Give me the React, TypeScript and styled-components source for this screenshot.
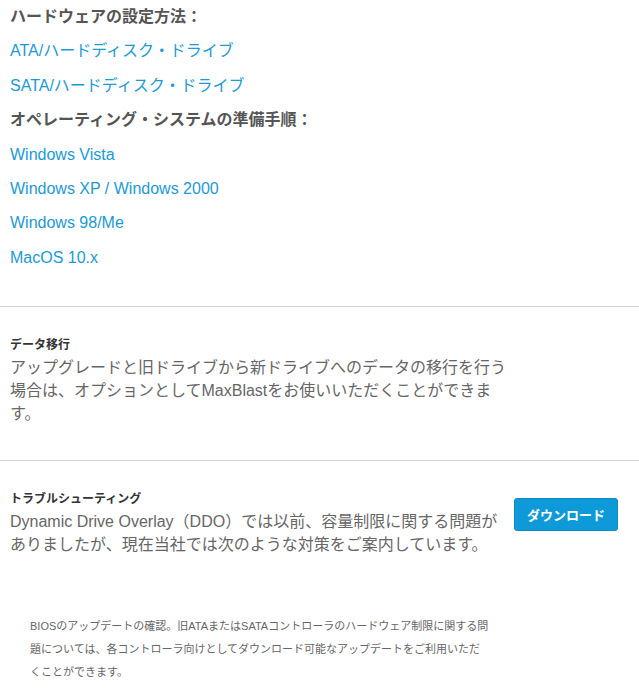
import React from "react";
import styled, { createGlobalStyle } from "styled-components";

const GlobalStyle = createGlobalStyle`
  body {
    margin: 0;
    background: #ffffff;
    font-family: "Liberation Sans", "Noto Sans CJK JP", sans-serif;
  }
`;

const Page = styled.div`
  width: 639px;
  color: #666666;
`;

const GuideList = styled.div`
  padding: 0 0 31px 10px;
`;

const GuideHeading = styled.div`
  font-size: 16px;
  font-weight: bold;
  line-height: 34.4px;
  color: #555555;
`;

const GuideLink = styled.a`
  display: block;
  font-size: 16px;
  line-height: 34.4px;
  color: #1b9ad6;
  text-decoration: none;
`;

const Divider = styled.hr`
  margin: 0;
  border: 0;
  border-top: 1px solid #d2d2d2;
`;

const Section = styled.div<{ $top: number; $bottom: number }>`
  padding: ${(p) => p.$top}px 21px ${(p) => p.$bottom}px 10px;
`;

const Label = styled.div`
  font-size: 12px;
  font-weight: bold;
  line-height: 18px;
  color: #333333;
`;

const Body = styled.p<{ $width: number }>`
  margin: 2px 0 0;
  width: ${(p) => p.$width}px;
  font-size: 16px;
  line-height: 23px;
  color: #666666;
`;

const Row = styled.div`
  display: flex;
  justify-content: space-between;
  align-items: flex-start;
`;

const RowText = styled.div`
  white-space: nowrap;
`;

const DownloadButton = styled.button`
  margin-top: 8px;
  width: 104px;
  height: 33px;
  border: 1px solid #0c8bc4;
  border-radius: 3px;
  background: #0e9ad8;
  color: #ffffff;
  font-family: "Liberation Sans", "Noto Sans CJK JP", sans-serif;
  font-size: 13px;
  font-weight: bold;
  cursor: pointer;
`;

const Note = styled.p`
  margin: 0;
  padding: 59px 0 0 30px;
  font-size: 11px;
  line-height: 23px;
  color: #666666;
`;

const hardwareLinks = ["ATA/ハードディスク・ドライブ", "SATA/ハードディスク・ドライブ"];
const osLinks = ["Windows Vista", "Windows XP / Windows 2000", "Windows 98/Me", "MacOS 10.x"];

export default function App() {
  return (
    <Page>
      <GlobalStyle />
      <GuideList>
        <GuideHeading>ハードウェアの設定方法：</GuideHeading>
        {hardwareLinks.map((l) => (
          <GuideLink key={l} href="#">{l}</GuideLink>
        ))}
        <GuideHeading>オペレーティング・システムの準備手順：</GuideHeading>
        {osLinks.map((l) => (
          <GuideLink key={l} href="#">{l}</GuideLink>
        ))}
      </GuideList>

      <Divider />
      <Section $top={29} $bottom={35}>
        <Label>データ移行</Label>
        <Body $width={497}>
          アップグレードと旧ドライブから新ドライブへのデータの移行を行う場合は、オプションとしてMaxBlastをお使いいただくことができます。
        </Body>
      </Section>

      <Divider />
      <Section $top={29} $bottom={0}>
        <Row>
          <RowText>
            <Label>トラブルシューティング</Label>
            <Body $width={495}>
              Dynamic Drive Overlay（DDO）では以前、容量制限に関する問題が
              <br />
              ありましたが、現在当社では次のような対策をご案内しています。
            </Body>
          </RowText>
          <DownloadButton>ダウンロード</DownloadButton>
        </Row>
      </Section>

      <Note>
        BIOSのアップデートの確認。旧ATAまたはSATAコントローラのハードウェア制限に関する問
        <br />
        題については、各コントローラ向けとしてダウンロード可能なアップデートをご利用いただ
        <br />
        くことができます。
      </Note>
    </Page>
  );
}
